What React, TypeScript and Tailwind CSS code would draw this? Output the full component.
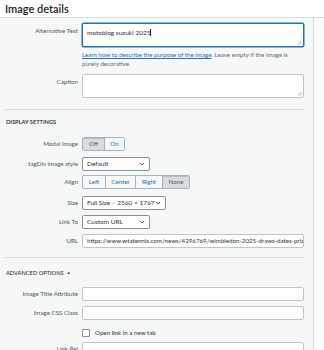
import React from 'react'

const font = { fontFamily: 'Lato, "Noto Sans", sans-serif' }

function Label({ children, top }: { children: React.ReactNode; top?: boolean }) {
    return (
        <div
            className={
                'w-[78px] shrink-0 text-right text-[6.2px] text-[#50575e] leading-[8px] ' +
                (top ? 'pt-[4px]' : 'self-center')
            }
        >
            {children}
        </div>
    )
}

function Row({ children, className = '' }: { children: React.ReactNode; className?: string }) {
    return <div className={'flex gap-[4px] pr-[9px] ' + className}>{children}</div>
}

function Grip() {
    return (
        <svg className="absolute right-[1px] bottom-[1px]" width="5" height="5" viewBox="0 0 5 5">
            <path d="M4.5 1 L1 4.5 M4.5 3 L3 4.5" stroke="#8c8f94" strokeWidth="0.7" />
        </svg>
    )
}

function Chevron() {
    return (
        <svg width="6" height="4" viewBox="0 0 6 4" className="shrink-0">
            <path d="M0.8 0.8 L3 3 L5.2 0.8" stroke="#50575e" strokeWidth="0.9" fill="none" />
        </svg>
    )
}

function Select({ value, width }: { value: string; width: string }) {
    return (
        <div
            className={
                'h-[14px] bg-white border border-[#8c8f94] rounded-[2px] flex items-center justify-between pl-[4px] pr-[4px] text-[6.5px] text-[#2c3338] ' +
                width
            }
        >
            <span className="whitespace-nowrap">{value}</span>
            <Chevron />
        </div>
    )
}

function TextInput({ value = '' }: { value?: string }) {
    return (
        <div className="flex-1 min-w-0 h-[14px] bg-white border border-[#c3c4c7] rounded-[2px] flex items-center pl-[4px] overflow-hidden text-[6.2px] text-[#2c3338] whitespace-nowrap">
            {value}
        </div>
    )
}

function ButtonGroup({ items, active }: { items: [string, string][]; active: string }) {
    return (
        <div className="flex h-[14px] border border-[#a0b4c6] rounded-[2px] overflow-hidden">
            {items.map(([label, w], i) => (
                <div
                    key={label}
                    className={
                        'flex items-center justify-center text-[6.2px] ' +
                        w +
                        (i > 0 ? ' border-l border-[#a0b4c6]' : '') +
                        (label === active
                            ? ' bg-[#dcdcde] text-[#50575e] shadow-[inset_0_1px_1px_rgba(0,0,0,0.15)]'
                            : ' bg-[#f6f7f7] text-[#2271b1]')
                    }
                >
                    {label}
                </div>
            ))}
        </div>
    )
}

export default function App() {
    return (
        <div className="w-[324px] h-[350px] overflow-hidden bg-white" style={font}>
            <div className="h-[18px] border-b border-[#dcdcde] pl-[5px] text-[11px] font-semibold text-[#1d2327] leading-[17px]">
                Image details
            </div>

            <div className="flex h-[332px]">
                <div className="w-[314px] shrink-0 bg-[#f6f7f7] border-r border-[#dcdcde] pt-[5px]">
                    <Row>
                        <Label top>Alternative Text</Label>
                        <div className="flex-1">
                            <div className="relative h-[24px] bg-white border border-[#2271b1] rounded-[2px] shadow-[0_0_0_0.5px_#2271b1] pl-[4px] pt-[4px] text-[6.5px] leading-[9px] text-[#2c3338]">
                                motoblog suzuki 2025
                                <span className="inline-block w-[1px] h-[7px] bg-[#1d2327] align-[-1px]" />
                                <Grip />
                            </div>
                            <p className="mt-[4px] text-[6.2px] leading-[8.5px] text-[#646970]">
                                <span className="text-[#2271b1] underline">
                                    Learn how to describe the purpose of the image
                                </span>
                                . Leave empty if the image is purely decorative.
                            </p>
                        </div>
                    </Row>

                    <Row className="mt-[6px]">
                        <Label top>Caption</Label>
                        <div className="relative flex-1 h-[24px] bg-white border border-[#c3c4c7] rounded-[2px]">
                            <Grip />
                        </div>
                    </Row>

                    <div className="mt-[11px] ml-[5px] mr-[9px] h-px bg-[#dcdcde]" />

                    <div className="mt-[7px] pl-[6px] text-[5.7px] leading-[10px] font-semibold text-[#1d2327]">
                        DISPLAY SETTINGS
                    </div>

                    <Row className="mt-[10px]">
                        <Label>Modal image</Label>
                        <ButtonGroup
                            items={[
                                ['Off', 'w-[21px]'],
                                ['On', 'w-[20px]'],
                            ]}
                            active="Off"
                        />
                    </Row>

                    <Row className="mt-[6px]">
                        <Label>tagDiv image style</Label>
                        <Select value="Default" width="w-[68px]" />
                    </Row>

                    <Row className="mt-[4px]">
                        <Label>Align</Label>
                        <ButtonGroup
                            items={[
                                ['Left', 'w-[22px]'],
                                ['Center', 'w-[30px]'],
                                ['Right', 'w-[27px]'],
                                ['None', 'w-[27px]'],
                            ]}
                            active="None"
                        />
                    </Row>

                    <Row className="mt-[7px]">
                        <Label>Size</Label>
                        <Select value="Full Size – 2560 × 1767" width="w-[84px]" />
                    </Row>

                    <Row className="mt-[5px]">
                        <Label>Link To</Label>
                        <Select value="Custom URL" width="w-[68px]" />
                    </Row>

                    <Row className="mt-[5px]">
                        <Label>URL</Label>
                        <TextInput value="https://www.wtatennis.com/news/4296769/wimbledon-2025-draws-dates-prize-money" />
                    </Row>

                    <div className="mt-[9px] ml-[5px] mr-[9px] h-px bg-[#dcdcde]" />

                    <div className="mt-[10px] pl-[6px] text-[5.7px] leading-[10px] text-[#1d2327] flex items-center gap-[3px]">
                        ADVANCED OPTIONS
                        <span className="text-[4.5px] text-[#50575e]">▲</span>
                    </div>

                    <Row className="mt-[9px]">
                        <Label>Image Title Attribute</Label>
                        <TextInput />
                    </Row>

                    <Row className="mt-[5px]">
                        <Label>Image CSS Class</Label>
                        <TextInput />
                    </Row>

                    <Row className="mt-[9px]">
                        <div className="w-[78px] shrink-0" />
                        <div className="flex items-center gap-[5px]">
                            <div className="w-[8px] h-[8px] bg-white border border-[#8c8f94] rounded-[1px]" />
                            <span className="text-[6.2px] leading-[8px] text-[#2c3338]">Open link in a new tab</span>
                        </div>
                    </Row>

                    <Row className="mt-[5px]">
                        <Label>Link Rel</Label>
                        <TextInput />
                    </Row>
                </div>
                <div className="flex-1 bg-[#fbfbfb]" />
            </div>
        </div>
    )
}
